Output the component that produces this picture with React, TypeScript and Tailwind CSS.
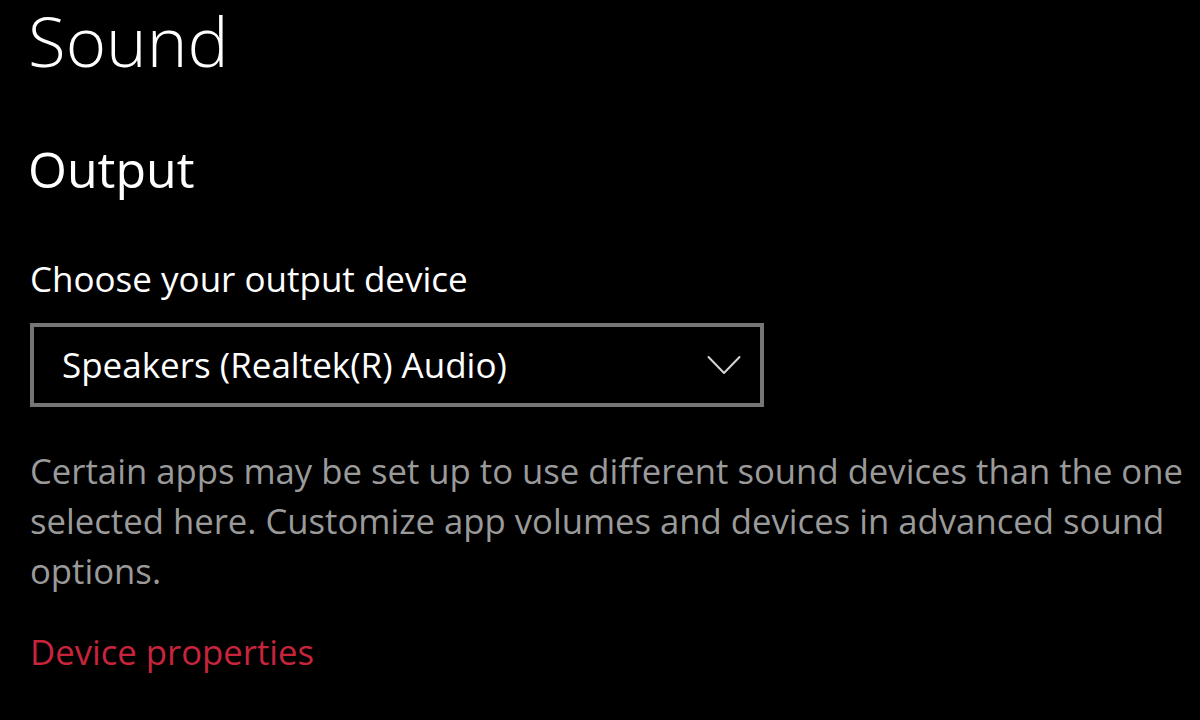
import React from "react";

export default function App() {
  const font = { fontFamily: '"Open Sans", "Noto Sans", sans-serif' };
  return (
    <div className="w-[1200px] h-[720px] bg-black overflow-hidden" style={font}>
      <div className="pl-[28px] flex flex-col">
        <h1 className="text-[69px] font-light text-white leading-[80px]">Sound</h1>
        <h2 className="text-[50px] font-normal text-white leading-[60px] mt-[59px]">Output</h2>
        <div className="text-[35px] text-white leading-[44px] mt-[58px] ml-[2px]">Choose your output device</div>
        <div className="mt-[22px] ml-[2px] w-[734px] h-[84px] border-[4px] border-[#767676] flex items-center justify-between pl-[28px] pr-[19px]">
          <span className="text-[35px] text-white">Speakers (Realtek(R) Audio)</span>
          <svg width="34" height="20" viewBox="0 0 34 20" fill="none">
            <path d="M1.5 2 L17 18 L32.5 2" stroke="#d4d4d4" strokeWidth="2" strokeLinecap="round" strokeLinejoin="round" />
          </svg>
        </div>
        <p className="mt-[39px] ml-[2px] w-[1170px] text-[34.7px] leading-[50px] text-[#9a9a9a]">
          Certain apps may be set up to use different sound devices than the one selected here. Customize app volumes and devices in advanced sound options.
        </p>
        <div className="mt-[31px] ml-[2px] text-[34.7px] leading-[50px] text-[#c8243c]">Device properties</div>
      </div>
    </div>
  );
}
